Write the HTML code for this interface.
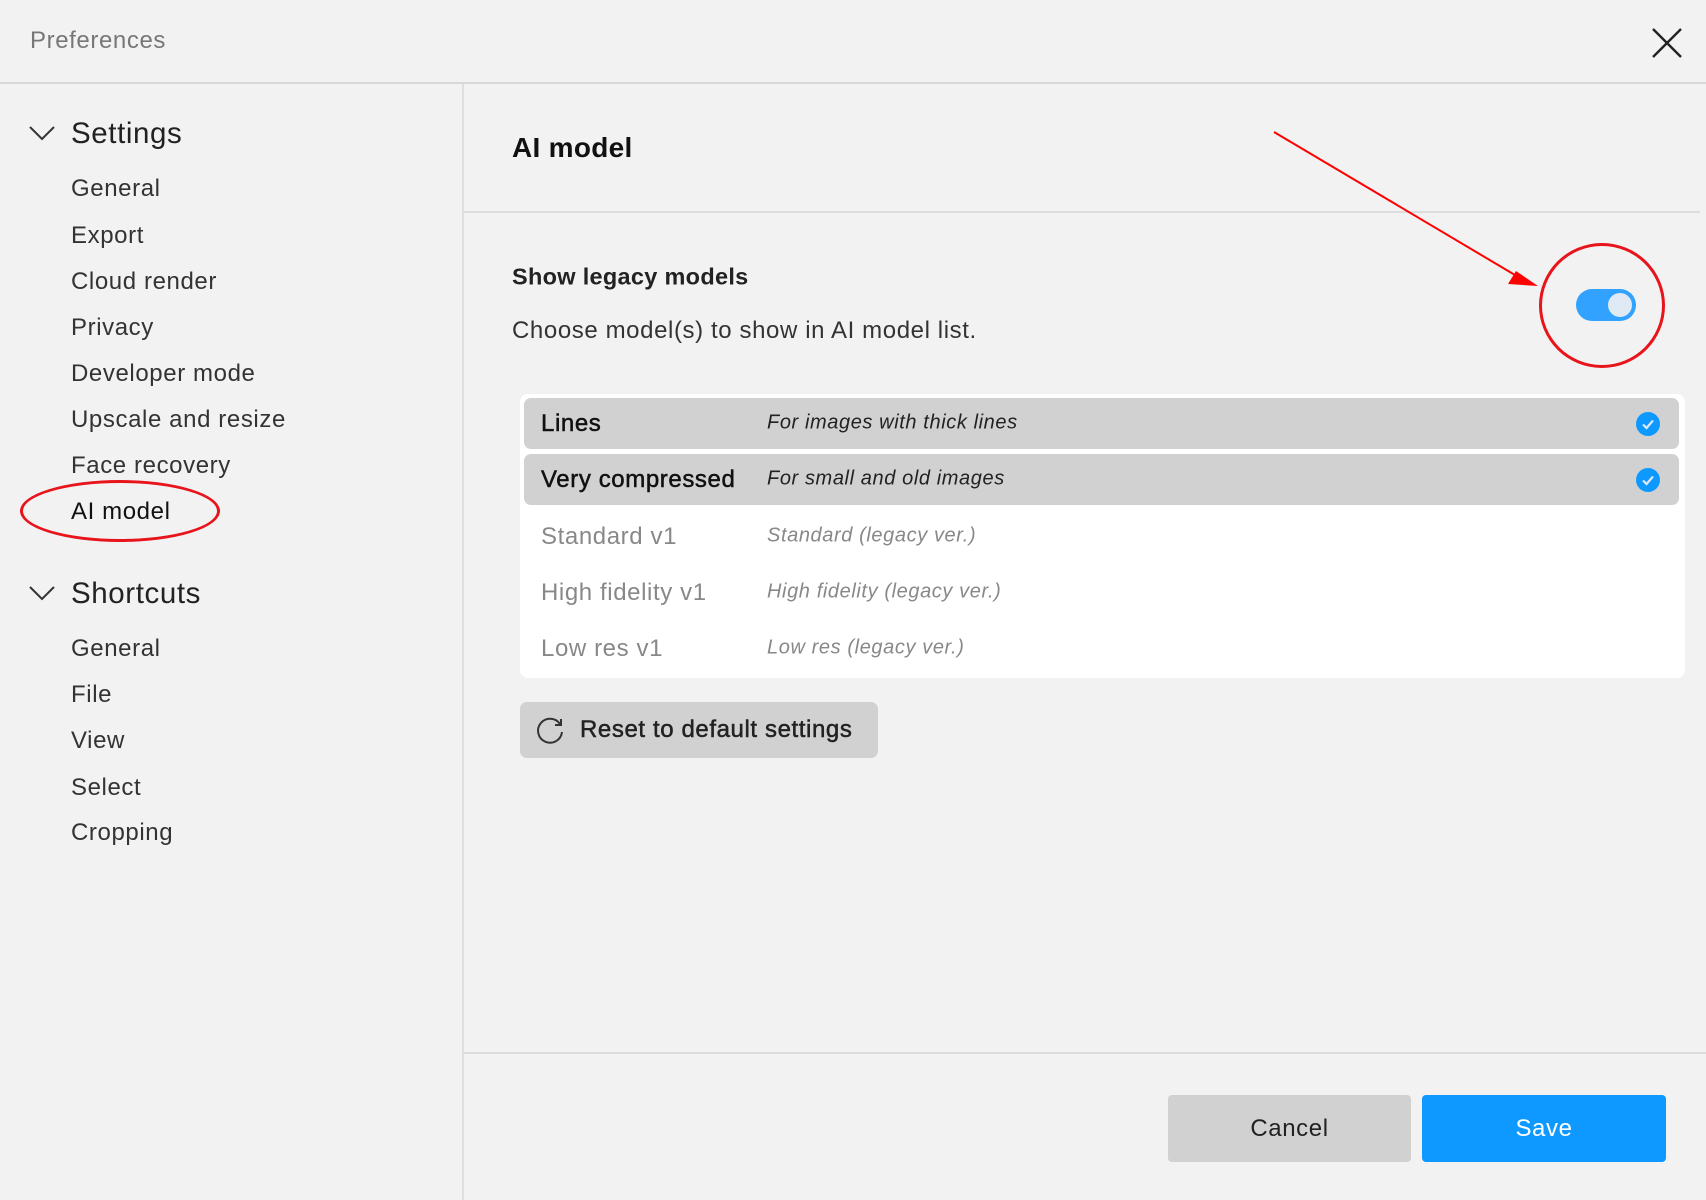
<!DOCTYPE html>
<html><head><meta charset="utf-8"><style>
*{margin:0;padding:0;box-sizing:border-box}
body{width:1706px;height:1200px;background:#f2f2f2;font-family:"Liberation Sans",sans-serif;color:#222;position:relative;overflow:hidden;letter-spacing:0.6px}
.a{position:absolute;white-space:nowrap}
.t{transform:translateY(-50%)}
.side{font-size:24px;color:#333;left:71px}
.row{position:absolute;left:524px;width:1155px;height:51px;border-radius:7px}
.row .n{position:absolute;left:17px;top:50%;transform:translateY(-50%);font-size:24px}
.row .d{position:absolute;left:243px;top:50%;transform:translateY(-55%);font-size:20px;font-style:italic}
.chk{position:absolute;left:1112px;top:14px;width:24px;height:24px;border-radius:50%;background:#0d99ff}
</style></head><body>
<div class="a t" style="left:30px;top:41px;font-size:24px;color:#777">Preferences</div>
<svg class="a" style="left:1650px;top:26px" width="34" height="34"><path d="M3 3L31 31M31 3L3 31" stroke="#222" stroke-width="2.4"/></svg>
<div class="a" style="left:0;top:82px;width:1706px;height:2px;background:#d8d8d8"></div>
<div class="a" style="left:462px;top:84px;width:2px;height:1116px;background:#dedede"></div>

<svg class="a" style="left:28px;top:124px" width="28" height="18"><path d="M2 3L14 15L26 3" stroke="#333" stroke-width="2" fill="none"/></svg>
<div class="a t" style="left:71px;top:134px;font-size:29.5px;color:#222">Settings</div>
<div class="a t side" style="top:189px">General</div>
<div class="a t side" style="top:236px">Export</div>
<div class="a t side" style="top:282px">Cloud render</div>
<div class="a t side" style="top:328px">Privacy</div>
<div class="a t side" style="top:374px">Developer mode</div>
<div class="a t side" style="top:420px">Upscale and resize</div>
<div class="a t side" style="top:466px">Face recovery</div>
<div class="a t side" style="top:512px;color:#111">AI model</div>
<div class="a" style="left:20px;top:480px;width:200px;height:62px;border:3px solid #e8141c;border-radius:50%"></div>
<svg class="a" style="left:28px;top:584px" width="28" height="18"><path d="M2 3L14 15L26 3" stroke="#333" stroke-width="2" fill="none"/></svg>
<div class="a t" style="left:71px;top:594px;font-size:29.5px;color:#222">Shortcuts</div>
<div class="a t side" style="top:649px">General</div>
<div class="a t side" style="top:695px">File</div>
<div class="a t side" style="top:741px">View</div>
<div class="a t side" style="top:788px">Select</div>
<div class="a t side" style="top:833px">Cropping</div>

<div class="a t" style="left:512px;top:148px;font-size:28px;font-weight:bold;letter-spacing:0.3px;color:#111">AI model</div>
<div class="a" style="left:464px;top:211px;width:1236px;height:2px;background:#dcdcdc"></div>
<div class="a t" style="left:512px;top:277px;font-size:23.5px;font-weight:bold;color:#222;letter-spacing:0.3px">Show legacy models</div>
<div class="a t" style="left:512px;top:331px;font-size:24px;color:#333">Choose model(s) to show in AI model list.</div>
<div class="a" style="left:1576px;top:289px;width:60px;height:32px;border-radius:16px;background:#31a2ff"><div style="position:absolute;right:4px;top:4px;width:24px;height:24px;border-radius:50%;background:#e0eaf5"></div></div>
<div class="a" style="left:1539px;top:243px;width:126px;height:125px;border:3.5px solid #e8141c;border-radius:50%"></div>
<svg class="a" style="left:0;top:0" width="1706" height="400"><line x1="1274" y1="132" x2="1520" y2="278" stroke="#f00" stroke-width="2"/><polygon points="1538,286 1516,271 1508,284" fill="#f00"/></svg>

<div class="a" style="left:520px;top:394px;width:1165px;height:284px;background:#fff;border-radius:8px"></div>
<div class="row" style="top:398px;background:#d1d1d1"><div class="n" style="color:#111;-webkit-text-stroke:0.5px #111">Lines</div><div class="d" style="color:#222">For images with thick lines</div><div class="chk"><svg width="24" height="24"><path d="M7 12.5L10.5 16L17 8.5" stroke="#dfe8f3" stroke-width="2.2" fill="none"/></svg></div></div>
<div class="row" style="top:454px;background:#d1d1d1"><div class="n" style="color:#111;-webkit-text-stroke:0.5px #111">Very compressed</div><div class="d" style="color:#222">For small and old images</div><div class="chk"><svg width="24" height="24"><path d="M7 12.5L10.5 16L17 8.5" stroke="#dfe8f3" stroke-width="2.2" fill="none"/></svg></div></div>
<div class="row" style="top:511px"><div class="n" style="color:#888">Standard v1</div><div class="d" style="color:#888">Standard (legacy ver.)</div></div>
<div class="row" style="top:567px"><div class="n" style="color:#888">High fidelity v1</div><div class="d" style="color:#888">High fidelity (legacy ver.)</div></div>
<div class="row" style="top:623px"><div class="n" style="color:#888">Low res v1</div><div class="d" style="color:#888">Low res (legacy ver.)</div></div>

<div class="a" style="left:520px;top:702px;width:358px;height:56px;background:#d1d1d1;border-radius:7px">
<svg style="position:absolute;left:15px;top:14px" width="30" height="30"><path d="M25 8A12 12 0 1 0 27 16" stroke="#333" stroke-width="2" fill="none"/><path d="M26 3V9H20" stroke="#333" stroke-width="2" fill="none"/></svg>
<div style="position:absolute;left:60px;top:50%;transform:translateY(-50%);font-size:24px;color:#222;-webkit-text-stroke:0.5px #222">Reset to default settings</div></div>

<div class="a" style="left:464px;top:1052px;width:1242px;height:2px;background:#dcdcdc"></div>
<div class="a" style="left:1168px;top:1095px;width:243px;height:67px;background:#d1d1d1;border-radius:4px;font-size:24px;text-align:center;line-height:67px;color:#222">Cancel</div>
<div class="a" style="left:1422px;top:1095px;width:244px;height:67px;background:#0d99ff;border-radius:4px;font-size:24px;text-align:center;line-height:67px;color:#fff">Save</div>
</body></html>
